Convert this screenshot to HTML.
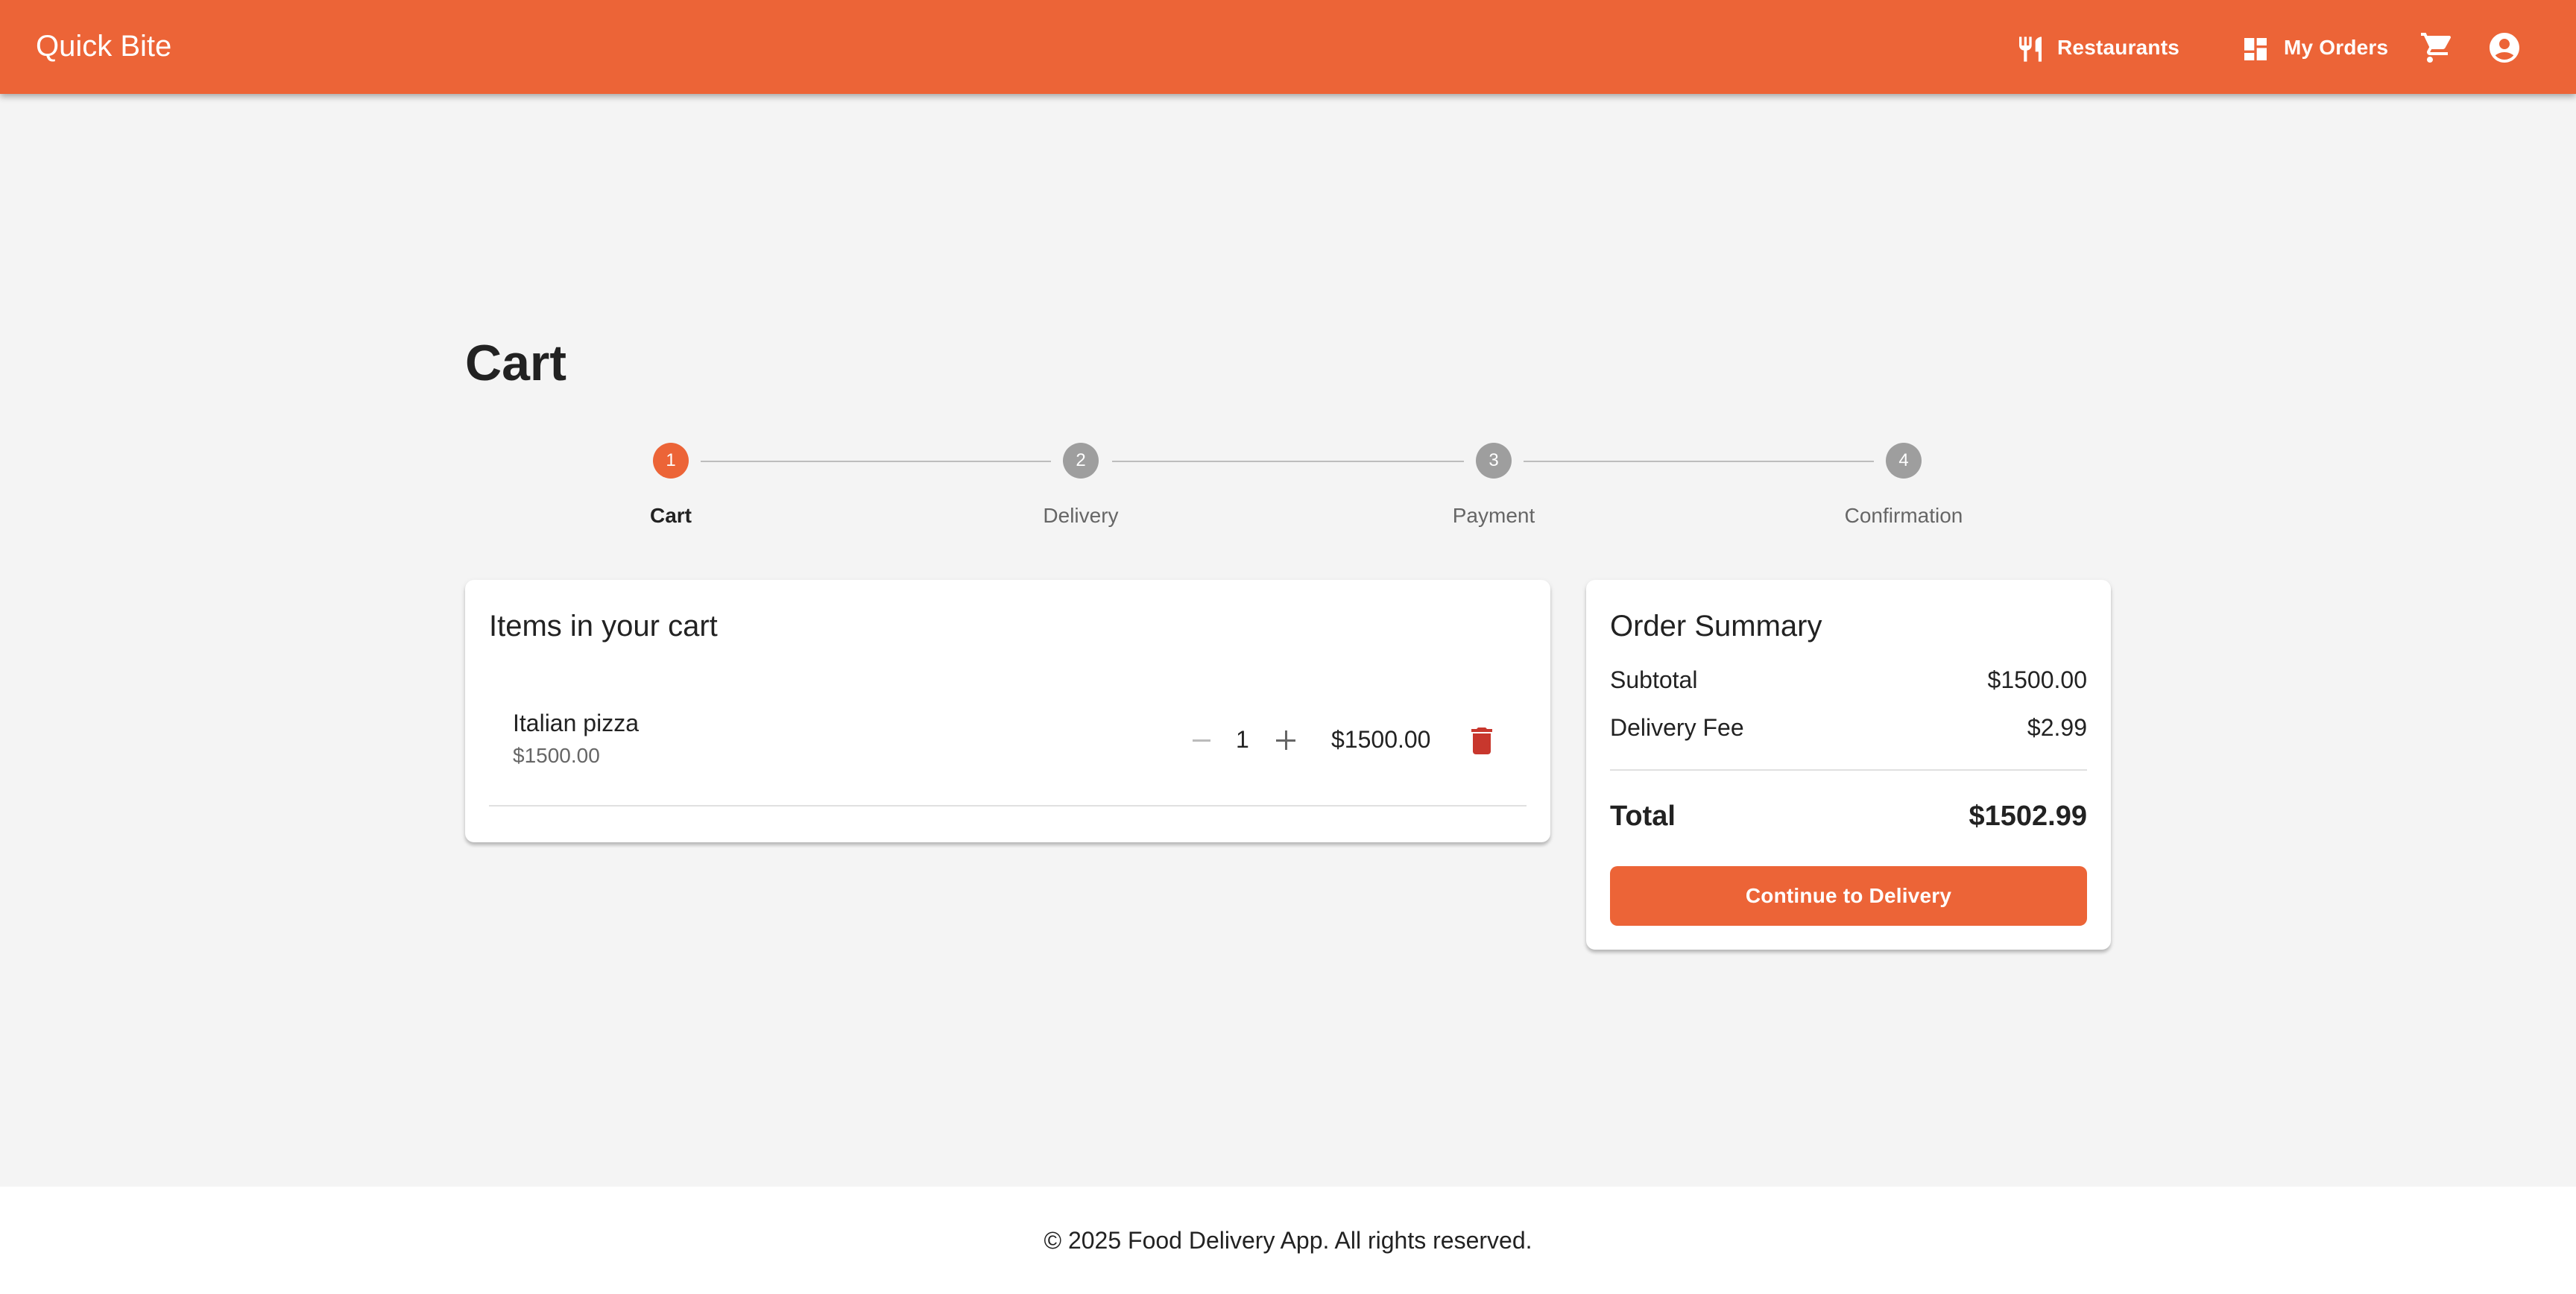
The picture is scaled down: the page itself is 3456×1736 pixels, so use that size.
<!DOCTYPE html>
<html><head><meta charset="utf-8"><style>
html{zoom:2}
*{box-sizing:border-box;margin:0;padding:0}
body{width:1728px;height:868px;background:#f4f4f4;font-family:"Liberation Sans",sans-serif;color:#222;position:relative;overflow:hidden}
.hdr{position:absolute;left:0;top:0;width:1728px;height:63px;background:#ec6437;box-shadow:0 2px 4px rgba(0,0,0,.3);color:#fff}
.hdr .t{position:absolute;left:24px;top:20px;font-size:20px}
.nav{position:absolute;top:24px;font-size:14px;font-weight:bold;letter-spacing:.1px}
.abs{position:absolute}
h1{position:absolute;left:312px;top:224px;font-size:34px;font-weight:bold;color:#222}
.line{position:absolute;top:309px;height:1px;background:#bdbdbd}
.c{position:absolute;top:297px;width:24px;height:24px;border-radius:50%;background:#9e9e9e;color:#fff;font-size:12px;text-align:center;line-height:24px}
.lbl{position:absolute;top:338px;font-size:14px;color:#666;width:160px;text-align:center}
.card{position:absolute;background:#fff;border-radius:6px;box-shadow:0 2px 2px rgba(0,0,0,.2),0 1px 4px rgba(0,0,0,.08)}
.row{position:absolute;left:16px;right:16px;font-size:16px;display:flex;justify-content:space-between}
.btn{position:absolute;left:16px;right:16px;top:192px;height:40px;background:#ec6437;border-radius:5px;color:#fff;font-size:14px;text-align:center;line-height:40px;font-weight:bold;letter-spacing:.1px}
.foot{position:absolute;left:0;top:796px;width:1728px;height:72px;background:#fff;text-align:center;font-size:16px;line-height:72px;color:#222}
</style></head><body>
<div class="hdr">
<div class="t">Quick Bite</div>
<svg class="abs" style="left:1352px;top:23px" width="20" height="20" viewBox="0 0 24 24" fill="#fff"><path d="M11 9H9V2H7v7H5V2H3v7c0 2.120 1.66 3.84 3.75 3.97V22h2.5v-9.03C11.34 12.84 13 11.12 13 9V2h-2v7zm5-3v8h2.5v8H21V2c-2.76 0-5 2.24-5 4z"/></svg>
<div class="nav" style="left:1380px">Restaurants</div>
<svg class="abs" style="left:1503px;top:23px" width="20" height="20" viewBox="0 0 24 24" fill="#fff"><path d="M3 13h8V3H3v10zm0 8h8v-6H3v6zm10 0h8V11h-8v10zm0-18v6h8V3h-8z"/></svg>
<div class="nav" style="left:1532px">My Orders</div>
<svg class="abs" style="left:1623px;top:20px" width="24" height="24" viewBox="0 0 24 24" fill="#fff"><path d="M7 18c-1.1 0-1.99.9-1.99 2S5.9 22 7 22s2-.9 2-2-.9-2-2-2zM1 2v2h2l3.6 7.59-1.35 2.45c-.16.28-.25.61-.25.96 0 1.1.9 2 2 2h12v-2H7.42c-.14 0-.25-.11-.25-.25l.03-.12.9-1.630h7.45c.75 0 1.41-.41 1.75-1.03l3.58-6.49A1.003 1.003 0 0020 4H5.21l-.94-2H1z"/></svg>
<svg class="abs" style="left:1668px;top:20px" width="24" height="24" viewBox="0 0 24 24" fill="#fff"><path d="M12 2C6.48 2 2 6.48 2 12s4.48 10 10 10 10-4.48 10-10S17.52 2 12 2zm0 4c1.93 0 3.5 1.57 3.5 3.5S13.93 13 12 13s-3.5-1.57-3.5-3.5S10.07 6 12 6zm0 14c-2.03 0-4.43-.82-6.14-2.88C7.55 15.8 9.68 15 12 15s4.45.8 6.140 2.12C16.43 19.18 14.03 20 12 20z"/></svg>
</div>
<h1>Cart</h1>
<div class="line" style="left:470px;width:235px"></div>
<div class="line" style="left:746px;width:236px"></div>
<div class="line" style="left:1022px;width:235px"></div>
<div class="c" style="left:438px;background:#ec6437">1</div>
<div class="c" style="left:713px">2</div>
<div class="c" style="left:990px">3</div>
<div class="c" style="left:1265px">4</div>
<div class="lbl" style="left:370px;color:#222;font-weight:bold">Cart</div>
<div class="lbl" style="left:645px">Delivery</div>
<div class="lbl" style="left:922px">Payment</div>
<div class="lbl" style="left:1197px">Confirmation</div>

<div class="card" style="left:312px;top:389px;width:728px;height:176px">
<div class="abs" style="left:16px;top:20px;font-size:20px">Items in your cart</div>
<div class="abs" style="left:32px;top:87px;font-size:16px">Italian pizza</div>
<div class="abs" style="left:32px;top:110px;font-size:14px;color:#666">$1500.00</div>
<div class="abs" style="left:488px;top:107px;width:12px;height:1.5px;background:#bbb"></div>
<div class="abs" style="left:517px;top:98px;font-size:16px">1</div>
<div class="abs" style="left:544px;top:107px;width:13px;height:1.5px;background:#666"></div>
<div class="abs" style="left:549.75px;top:101px;width:1.5px;height:13px;background:#666"></div>
<div class="abs" style="left:581px;top:98px;font-size:16px">$1500.00</div>
<svg class="abs" style="left:670px;top:96px" width="24" height="24" viewBox="0 0 24 24" fill="#c8372d"><path d="M6 19c0 1.1.9 2 2 2h8c1.1 0 2-.9 2-2V7H6v12zM19 4h-3.5l-1-1h-5l-1 1H5v2h14V4z"/></svg>
<div class="abs" style="left:16px;right:16px;top:151px;height:1px;background:#e0e0e0"></div>
</div>

<div class="card" style="left:1064px;top:389px;width:352px;height:248px">
<div class="abs" style="left:16px;top:20px;font-size:20px">Order Summary</div>
<div class="row" style="top:58px"><span>Subtotal</span><span>$1500.00</span></div>
<div class="row" style="top:90px"><span>Delivery Fee</span><span>$2.99</span></div>
<div class="abs" style="left:16px;right:16px;top:127px;height:1px;background:#e0e0e0"></div>
<div class="row" style="top:148px;font-size:19px;font-weight:bold"><span>Total</span><span>$1502.99</span></div>
<div class="btn">Continue to Delivery</div>
</div>
<div class="foot">© 2025 Food Delivery App. All rights reserved.</div>
</body></html>
